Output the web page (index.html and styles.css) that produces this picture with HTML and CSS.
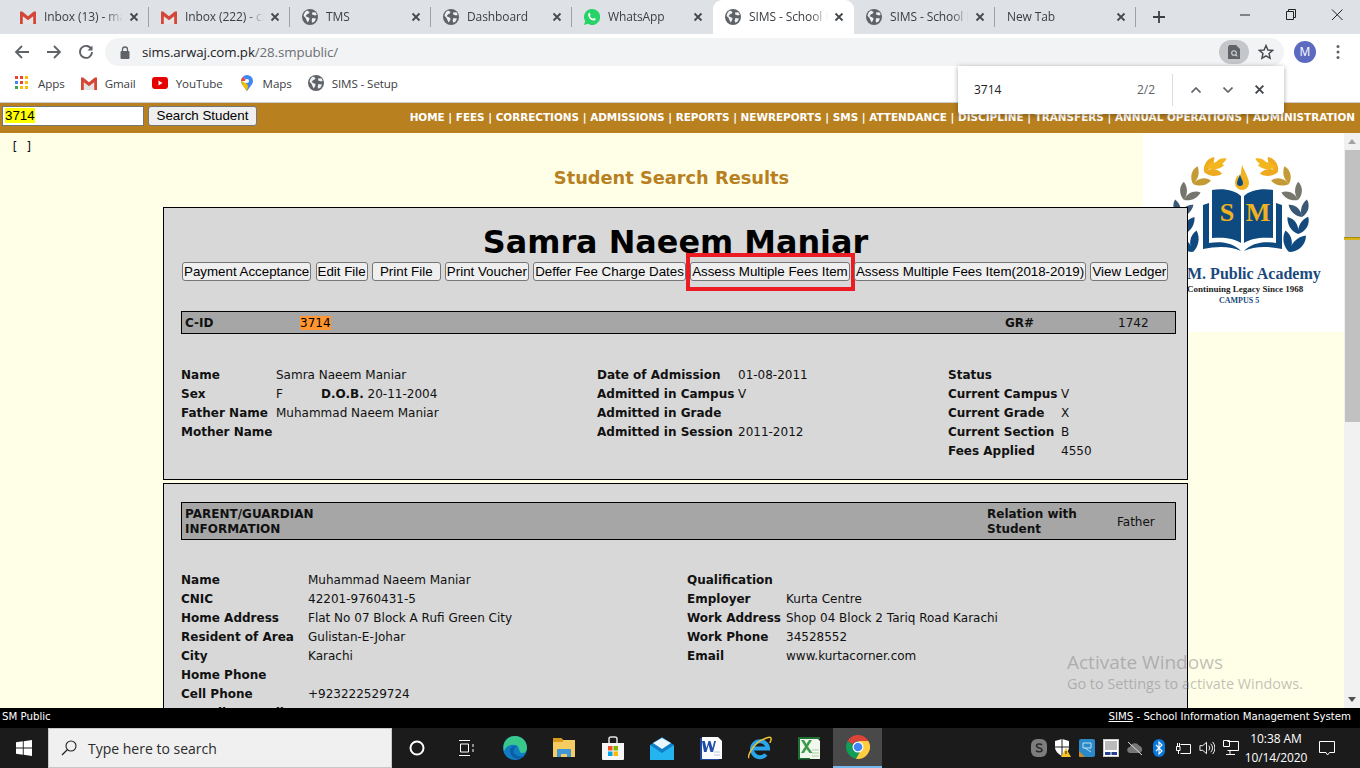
FILE: index.html
```html
<!DOCTYPE html>
<html lang="en">
<head>
<meta charset="utf-8">
<title>SIMS - School Information Management System</title>
<link rel="stylesheet" href="styles.css">
</head>
<body>
<svg class="defs" width="0" height="0" aria-hidden="true">
  <symbol id="i-gmail" viewBox="0 0 16 14">
    <path d="M2.800 6.200 8 10.200l5.200-4V14H2.800z" fill="#e4e4e4"/>
    <path d="M0 1.500h2.200L8 6.300l5.800-4.800H16V14h-2.800V6.200L8 10.200 2.800 6.200V14H0z" fill="#d44638"/>
  </symbol>
  <symbol id="i-globe" viewBox="0 0 16 16">
    <circle cx="8" cy="8" r="8" fill="#5f6368"/>
    <path d="M5 1.600 7.600 3 6.800 4.600 5 5.200 3.600 7.200 6 8.200 7.600 9.200 7 11.400 5.600 13.600 4.400 11 3.600 9 1.600 7C1.800 4.600 3 2.800 5 1.600ZM10 3.600l3.400-.4 1.400 2.600-1.800.8-1.400-.6-1.400-.6zM10.400 9l3.600.4-1.400 3-2.200 1.400-.8-2z" fill="#eef0f2"/>
  </symbol>
  <symbol id="i-whatsapp" viewBox="0 0 16 16">
    <path d="M8 0a8 8 0 0 0-6.800 12.200L0 16l3.900-1.200A8 8 0 1 0 8 0z" fill="#25d366"/>
    <path d="M5.400 3.800c.5 0 .8 1.200 1.100 1.900.1.400-.6 1-.6 1.300.6 1.300 1.700 2.200 2.900 2.800.4-.1.800-1 1.200-.9l1.700.9c.2 1.100-1 1.900-2 1.800-2.800-.4-5-2.600-5.500-5.200-.1-1.100.5-2.600 1.200-2.600z" fill="#fff"/>
  </symbol>
  <symbol id="i-x" viewBox="0 0 10 10">
    <path d="M1.500 1.500l7 7M8.500 1.500l-7 7" stroke="#45494e" stroke-width="1.800" fill="none"/>
  </symbol>
  <path id="leaf" d="M0 0C5-5 12-6 18-3 14 3 6 4 0 0Z"/>
</svg>

<div class="chrome">
  <div class="tabstrip">
    <div class="tab"><svg class="fav"><use href="#i-gmail"/></svg><span class="tab-title">Inbox (13) - mar</span><svg class="tab-x"><use href="#i-x"/></svg></div>
    <div class="tab"><svg class="fav"><use href="#i-gmail"/></svg><span class="tab-title">Inbox (222) - cas</span><svg class="tab-x"><use href="#i-x"/></svg></div>
    <div class="tab"><svg class="fav"><use href="#i-globe"/></svg><span class="tab-title">TMS</span><svg class="tab-x"><use href="#i-x"/></svg></div>
    <div class="tab"><svg class="fav"><use href="#i-globe"/></svg><span class="tab-title">Dashboard</span><svg class="tab-x"><use href="#i-x"/></svg></div>
    <div class="tab tab-noline"><svg class="fav"><use href="#i-whatsapp"/></svg><span class="tab-title">WhatsApp</span><svg class="tab-x"><use href="#i-x"/></svg></div>
    <div class="tab tab-active"><svg class="fav"><use href="#i-globe"/></svg><span class="tab-title">SIMS - School Information</span><svg class="tab-x"><use href="#i-x"/></svg></div>
    <div class="tab"><svg class="fav"><use href="#i-globe"/></svg><span class="tab-title">SIMS - School Information</span><svg class="tab-x"><use href="#i-x"/></svg></div>
    <div class="tab tab-new"><span class="tab-title">New Tab</span><svg class="tab-x"><use href="#i-x"/></svg></div>
    <svg class="newtab" viewBox="0 0 12 12"><path d="M6 0v12M0 6h12" stroke="#3c4043" stroke-width="1.800"/></svg>
    <div class="winctl">
      <svg class="winbtn" viewBox="0 0 46 30"><path d="M18 15h10" stroke="#222" stroke-width="1"/></svg>
      <svg class="winbtn" viewBox="0 0 46 30"><path d="M18.500 11.500h7v8h-7zM20.500 11.500v-2h7v8h-2" stroke="#222" fill="none"/></svg>
      <svg class="winbtn" viewBox="0 0 46 30"><path d="M18 9.500l10.500 10.500M28.500 9.500 18 20" stroke="#222" fill="none"/></svg>
    </div>
  </div>

  <div class="toolbar">
    <svg class="navicon" viewBox="0 0 16 16"><path d="M15 8H2M8 2 2 8l6 6" stroke="#5f6368" stroke-width="1.800" fill="none"/></svg>
    <svg class="navicon" viewBox="0 0 16 16"><path d="M1 8h13M8 2l6 6-6 6" stroke="#5f6368" stroke-width="1.800" fill="none"/></svg>
    <svg class="navicon" viewBox="0 0 16 16"><path d="M13.500 5.500A6 6 0 1 0 14 8" stroke="#5f6368" stroke-width="1.800" fill="none"/><path d="M14.500 1.500v5h-5z" fill="#5f6368"/></svg>
    <div class="omnibox">
      <svg class="lock" viewBox="0 0 10 13"><path d="M2.500 5V3.500a2.500 2.500 0 0 1 5 0V5" stroke="#5f6368" stroke-width="1.300" fill="none"/><rect x="0.500" y="5" width="9" height="8" rx="1" fill="#5f6368"/></svg>
      <span class="url"><span class="url-host">sims.arwaj.com.pk</span>/28.smpublic/</span>
      <span class="lens"><svg viewBox="0 0 12 14" width="12" height="14"><path d="M0 1.500 1.500 0H8l4 4v10H0z" fill="#5f6368"/><circle cx="6" cy="8" r="2.300" fill="none" stroke="#d0d2d5" stroke-width="1.100"/><path d="M7.600 9.600 9.300 11.300" stroke="#d0d2d5" stroke-width="1.100"/></svg></span>
      <svg class="star" viewBox="0 0 16 16"><path d="M8 1.500 9.900 6l4.800.4-3.700 3.100 1.100 4.800L8 11.800l-4.100 2.500L5 9.500 1.300 6.400 6.100 6z" fill="none" stroke="#45494e" stroke-width="1.400"/></svg>
    </div>
    <span class="avatar">M</span>
    <svg class="dots" viewBox="0 0 4 16"><circle cx="2" cy="2.500" r="1.500"/><circle cx="2" cy="8" r="1.500"/><circle cx="2" cy="13.500" r="1.500"/></svg>
  </div>

  <div class="bookmarks">
    <div class="bm bm-apps"><svg class="bm-ico-apps" viewBox="0 0 14 14"><g fill="#ea4335"><rect width="3" height="3"/><rect x="5" width="3" height="3"/></g><rect x="10" width="3" height="3" fill="#fbbc05"/><rect y="5" width="3" height="3" fill="#4285f4"/><rect x="5" y="5" width="3" height="3" fill="#ea4335"/><rect x="10" y="5" width="3" height="3" fill="#fbbc05"/><rect y="10" width="3" height="3" fill="#34a853"/><rect x="5" y="10" width="3" height="3" fill="#fbbc05"/><rect x="10" y="10" width="3" height="3" fill="#fbbc05"/></svg>Apps</div>
    <div class="bm bm-gmail"><svg class="fav"><use href="#i-gmail"/></svg>Gmail</div>
    <div class="bm bm-yt"><svg class="fav" viewBox="0 0 16 16"><rect y="2" width="16" height="12" rx="3" fill="#e60000"/><path d="M6.500 5.500v5l4-2.500z" fill="#fff"/></svg>YouTube</div>
    <div class="bm bm-maps"><svg class="fav" viewBox="0 0 12 16"><path d="M6 0a6 6 0 0 1 6 6c0 1.500-.6 2.500-1.200 3.400L6 16l-2-3z" fill="#4285f4"/><path d="M6 16 1.200 9.400C.6 8.500 0 7.500 0 6l6 3z" fill="#34a853"/><path d="M0 6a6 6 0 0 1 1.800-4.200L6 6z" fill="#ea4335"/><path d="M1.800 1.800A6 6 0 0 1 6 0l2 3-2 3z" fill="#4285f4"/><path d="M6 9 0 6l1.500 4L6 16l1-5z" fill="#fbbc05"/><circle cx="6" cy="6" r="2" fill="#fff"/></svg>Maps</div>
    <div class="bm"><svg class="fav"><use href="#i-globe"/></svg>SIMS - Setup</div>
  </div>
</div>

<div class="findbar">
  <span class="find-q">3714</span>
  <span class="find-c">2/2</span>
  <span class="find-sep"></span>
  <svg class="find-ico" viewBox="0 0 10 6"><path d="M.5 5.500 5 1l4.500 4.500" stroke="#5f6368" stroke-width="1.600" fill="none"/></svg>
  <svg class="find-ico" viewBox="0 0 10 6"><path d="M.5.500 5 5 9.500.5" stroke="#5f6368" stroke-width="1.600" fill="none"/></svg>
  <svg class="find-ico find-x"><use href="#i-x"/></svg>
</div>

<header class="sitebar">
  <form class="searchform">
    <div class="searchbox"><mark class="hl-y">3714</mark></div>
    <span class="btn btn-search">Search Student</span>
  </form>
  <nav class="sitenav">HOME | FEES | CORRECTIONS | ADMISSIONS | REPORTS | NEWREPORTS | SMS | ATTENDANCE | DISCIPLINE | TRANSFERS | ANNUAL OPERATIONS | ADMINISTRATION</nav>
</header>

<div class="viewport">
  <div class="pagearea">
    <main class="main">
      <div class="brackets">[ ]</div>
      <h2 class="results-title">Student Search Results</h2>

      <section class="card card-1">
        <h1 class="student-name">Samra Naeem Maniar</h1>
        <div class="btnrow">
          <span class="btn">Payment Acceptance</span>
          <span class="btn">Edit File</span>
          <span class="btn btn-wide">Print File</span>
          <span class="btn">Print Voucher</span>
          <span class="btn">Deffer Fee Charge Dates</span>
          <span class="btn btn-mark">Assess Multiple Fees Item<span class="redbox"></span></span>
          <span class="btn">Assess Multiple Fees Item(2018-2019)</span>
          <span class="btn">View Ledger</span>
        </div>
        <div class="idbar">
          <b class="idbar-l1">C-ID</b>
          <span class="idbar-v1"><mark class="hl-o">3714</mark></span>
          <b class="idbar-l2">GR#</b>
          <span class="idbar-v2">1742</span>
        </div>
        <div class="info3">
          <dl class="fields f-a">
            <dt>Name</dt><dd>Samra Naeem Maniar</dd>
            <dt>Sex</dt><dd class="sexrow"><span class="sexval">F</span><b>D.O.B.</b> 20-11-2004</dd>
            <dt>Father Name</dt><dd>Muhammad Naeem Maniar</dd>
            <dt>Mother Name</dt><dd></dd>
          </dl>
          <dl class="fields f-b">
            <dt>Date of Admission</dt><dd>01-08-2011</dd>
            <dt>Admitted in Campus</dt><dd>V</dd>
            <dt>Admitted in Grade</dt><dd></dd>
            <dt>Admitted in Session</dt><dd>2011-2012</dd>
          </dl>
          <dl class="fields f-c">
            <dt>Status</dt><dd></dd>
            <dt>Current Campus</dt><dd>V</dd>
            <dt>Current Grade</dt><dd>X</dd>
            <dt>Current Section</dt><dd>B</dd>
            <dt>Fees Applied</dt><dd>4550</dd>
          </dl>
        </div>
      </section>

      <section class="card card-2">
        <div class="idbar idbar-tall">
          <b class="pg-title">PARENT/GUARDIAN<br>INFORMATION</b>
          <b class="pg-rel">Relation with<br>Student</b>
          <span class="pg-val">Father</span>
        </div>
        <div class="info2">
          <dl class="fields f-d">
            <dt>Name</dt><dd>Muhammad Naeem Maniar</dd>
            <dt>CNIC</dt><dd>42201-9760431-5</dd>
            <dt>Home Address</dt><dd>Flat No 07 Block A Rufi Green City</dd>
            <dt>Resident of Area</dt><dd>Gulistan-E-Johar</dd>
            <dt>City</dt><dd>Karachi</dd>
            <dt>Home Phone</dt><dd></dd>
            <dt>Cell Phone</dt><dd>+923222529724</dd>
            <dt>Guardian Email</dt><dd></dd>
          </dl>
          <dl class="fields f-e">
            <dt>Qualification</dt><dd></dd>
            <dt>Employer</dt><dd>Kurta Centre</dd>
            <dt>Work Address</dt><dd>Shop 04 Block 2 Tariq Road Karachi</dd>
            <dt>Work Phone</dt><dd>34528552</dd>
            <dt>Email</dt><dd>www.kurtacorner.com</dd>
          </dl>
        </div>
      </section>
    </main>

    <aside class="logo">
      <svg class="logo-art" viewBox="0 0 201 130" width="201" height="130">
        <g id="wreath-r">
          <use href="#leaf" fill="#0e4a80" transform="translate(146 119) rotate(-35) scale(1.300)"/>
          <use href="#leaf" fill="#0e4a80" transform="translate(146 119) rotate(-90) scale(1.200)"/>
          <use href="#leaf" fill="#15497c" transform="translate(155 101) rotate(-50) scale(1.100)"/>
          <use href="#leaf" fill="#15497c" transform="translate(155 101) rotate(-112) scale(1.100)"/>
          <use href="#leaf" fill="#3a5876" transform="translate(159 84) rotate(-65)"/>
          <use href="#leaf" fill="#3a5876" transform="translate(159 84) rotate(-128)"/>
          <use href="#leaf" fill="#76766c" transform="translate(155 67) rotate(-80)"/>
          <use href="#leaf" fill="#76766c" transform="translate(155 67) rotate(-146)"/>
          <use href="#leaf" fill="#c49a35" transform="translate(146 51) rotate(-95)"/>
          <use href="#leaf" fill="#c49a35" transform="translate(146 51) rotate(-160)"/>
          <use href="#leaf" fill="#eeab1f" transform="translate(135 39) rotate(-115)"/>
          <use href="#leaf" fill="#eeab1f" transform="translate(135 39) rotate(-176)"/>
          <use href="#leaf" fill="#f4b61e" transform="translate(125 33) rotate(-140) scale(.8)"/>
          <use href="#leaf" fill="#f4b61e" transform="translate(133 34) rotate(-165)"/>
        </g>
        <use href="#wreath-r" transform="translate(196 0) scale(-1 1)"/>
        <path d="M99 32c4 9 7 14 7 18a7 7 0 0 1-14 0c0-3 1-5 3-8 1 2 1 3 2 4z" fill="#f0b21e"/>
        <path d="M97 41c1 5 3 6 3 9a3 3 0 0 1-6 0c0-3 2-5 3-9z" fill="#0e4a80"/>
        <path d="M60 72l6-2v40c13-2 24 0 32 8-10-5-24-5-38-2zM139 72l-6-2v40c-13-2-24 0-32 8 10-5 24-5 38-2z" fill="#0e4a80"/>
        <path d="M69 57c11-2 23 0 29 6v47c-7-5-18-6-29-5zM130 57c-11-2-23 0-29 6v47c7-5 18-6 29-5z" fill="#0e4a80"/>
        <text x="84" y="88" class="logo-sm">S</text>
        <text x="115" y="88" class="logo-sm">M</text>
      </svg>
      <div class="logo-name">M. Public Academy</div>
      <div class="logo-tag">Continuing Legacy Since 1968</div>
      <div class="logo-campus">CAMPUS 5</div>
    </aside>
  </div>

  <div class="scrollbar">
    <span class="sb-up"></span>
    <span class="sb-track"><span class="sb-thumb"></span><span class="sb-tick"></span></span>
    <span class="sb-down"></span>
  </div>

  <div class="activate">
    <div class="activate-h">Activate Windows</div>
    <div class="activate-s">Go to Settings to activate Windows.</div>
  </div>
</div>

<div class="statusbar">
  <span>SM Public</span>
  <span><u>SIMS</u> - School Information Management System</span>
</div>

<footer class="taskbar">
  <div class="start"><svg viewBox="0 0 16 16" width="16" height="16"><path d="M0 2.300 6.800 1.300V7.600H0zM7.700 1.200 16 0V7.600H7.700zM0 8.400H6.800V14.700L0 13.700zM7.700 8.400H16V16L7.700 14.800z" fill="#fff"/></svg></div>
  <div class="tb-search"><svg viewBox="0 0 16 16" width="16" height="16"><circle cx="10" cy="6" r="5" fill="none" stroke="#222" stroke-width="1.100"/><path d="M6.500 9.500 1 15" stroke="#222" stroke-width="1.300"/></svg><span>Type here to search</span></div>
  <div class="tb-apps">
    <span class="tb-app"><svg viewBox="0 0 16 16" width="16" height="16"><circle cx="8" cy="8" r="6.500" fill="none" stroke="#fff" stroke-width="2"/></svg></span>
    <span class="tb-app"><svg viewBox="0 0 16 16" width="16" height="16"><path d="M1 .5h11M1 15.500h11M2.500 4h8v8h-8zM15 4v3M15 9v3" stroke="#fff" fill="none"/></svg></span>
    <span class="tb-app"><svg viewBox="0 0 24 24" width="24" height="24"><circle cx="12" cy="12" r="12" fill="#0f7cc4"/><path d="M12 0c7 0 12 5 12 12 0 3-2 5-5 5-4 0-1-6-7-8-4-1-9 1-11 6C-1 7 4 0 12 0z" fill="#39c88c"/><path d="M7 15c0-3 3-6 8-5-4 1-5 4-4 7 2 3 6 4 10 3-4 5-14 3-14-5z" fill="#0b5fa5"/></svg></span>
    <span class="tb-app"><svg viewBox="0 0 22 20" width="22" height="20"><path d="M0 0h8l2 2h12v17H0z" fill="#f4cc62"/><path d="M0 0h8l2 2v2H0z" fill="#d99a1c"/><path d="M4 19v-7a1 1 0 0 1 1-1h12a1 1 0 0 1 1 1v7h-4v-3H8v3z" fill="#3f97d8"/></svg></span>
    <span class="tb-app"><svg viewBox="0 0 24 24" width="24" height="24"><path d="M8 7V3a2 2 0 0 1 2-2h4a2 2 0 0 1 2 2v4" fill="none" stroke="#e4e4e4" stroke-width="1.500"/><path d="M1 7h22v16a1 1 0 0 1-1 1H2a1 1 0 0 1-1-1z" fill="#f6f6f6"/><rect x="7" y="10" width="4.500" height="4.500" fill="#f25022"/><rect x="12.500" y="10" width="4.500" height="4.500" fill="#7fba00"/><rect x="7" y="15.500" width="4.500" height="4.500" fill="#00a4ef"/><rect x="12.500" y="15.500" width="4.500" height="4.500" fill="#ffb900"/></svg></span>
    <span class="tb-app"><svg viewBox="0 0 24 23" width="24" height="23"><path d="M0 8 12 0l12 8v15H0z" fill="#0f7fc8"/><path d="M0 8l12 8 12-8v15H0z" fill="#24b5f0"/><path d="M3 6l9-5 9 5-9 6z" fill="#e8f7ff"/></svg></span>
    <span class="tb-app"><svg viewBox="0 0 24 24" width="24" height="24"><path d="M3 1h16l4 4v18H3z" fill="#fdfdfd"/><path d="M3 1h10v14H3z" fill="#fff"/><path d="M1 4h2l0 19h17v1H1z" fill="#22479c"/><path d="M1 2h2v2H1z" fill="#22479c"/><path d="M3 5h2.800l1.700 7 2-7h2l2 7 1.700-7H17l-3 11h-2.500L9.500 9l-2 7H5z" fill="#1f4fa8"/><path d="M15 16h6M15 19h6" stroke="#b7c6de"/></svg></span>
    <span class="tb-app"><svg viewBox="0 0 24 24" width="24" height="24"><path d="M5 12.500h15A8 8 0 1 0 18 18.500" fill="none" stroke="#2aa4ea" stroke-width="4"/><path d="M1 22C-1 19 7 6 16 3c4-2 8-3 7 1 0 1-1 2-1 3" fill="none" stroke="#f0c132" stroke-width="1.500"/></svg></span>
    <span class="tb-app"><svg viewBox="0 0 24 24" width="24" height="24"><path d="M1 1h18l4 4v18H1z" fill="#f1f7ec"/><path d="M1 1h22v2H1zM1 3h2v20H1zM1 22h12v1.500H1z" fill="#1f6f34"/><path d="M4 4h3l2.500 4L12 4h3l-4 6.500 4.500 6.500h-3L9.500 13 7 17H4l4-6.500z" fill="#3d9b4c"/><path d="M15 14h7M15 17h7M15 20h7" stroke="#a9cfa4"/></svg></span>
    <span class="tb-app tb-app-active"><svg viewBox="0 0 24 24" width="24" height="24"><path d="M1.600 6A12 12 0 0 1 22.400 6H12A6 6 0 0 0 6.500 9.600z" fill="#db4437"/><path d="M1.600 6A12 12 0 0 0 10 23.800L15 15A6 6 0 0 1 6.500 9.600z" fill="#0f9d58"/><path d="M22.400 6A12 12 0 0 1 10 23.800L15 15A6 6 0 0 0 12 6z" fill="#ffcd40"/><circle cx="12" cy="12" r="5.500" fill="#fff"/><circle cx="12" cy="12" r="4.300" fill="#4285f4"/></svg></span>
  </div>
  <div class="tray">
    <svg class="tr" viewBox="0 0 16 18"><rect width="16" height="18" rx="6" fill="#7d7d7d"/><path d="M11 6c-1-1.500-5.500-1.500-5.500 1 0 2.500 5.500 1.500 5.500 4 0 2.500-5 2-6 .5" fill="none" stroke="#2a2a2a" stroke-width="1.500"/></svg>
    <svg class="tr" viewBox="0 0 16 18"><path d="M0 2 7 0l7 2v6c0 4-3 7-7 9-4-2-7-5-7-9z" fill="#fff"/><path d="M7 0v17M0 8h14" stroke="#222"/><path d="M11 9l5 9H6z" fill="#f7c326"/><path d="M11 12v3" stroke="#222"/></svg>
    <svg class="tr" viewBox="0 0 16 18"><rect width="16" height="18" rx="2" fill="#2b89c9"/><path d="M4 4h8v5H4zM6 9l6 4" fill="none" stroke="#bfe3f5"/><path d="M0 12l6 6H1a1 1 0 0 1-1-1z" fill="#c88d28"/></svg>
    <svg class="tr" viewBox="0 0 16 18"><rect x=".5" y=".5" width="15" height="17" fill="#fff" stroke="#ccc"/><rect x="2" y="2" width="12" height="9" fill="#bbb"/><path d="M2 13h5.500v3H2zM8.500 13H14v3H8.500z" fill="#24408e"/></svg>
    <svg class="tr" viewBox="0 0 16 18"><path d="M3.500 14a3 3 0 0 1-.5-6 5 5 0 0 1 9-1.500A4 4 0 0 1 13 14z" fill="#777"/><path d="M1 3l14 13" stroke="#ddd"/></svg>
    <svg class="tr tr-bt" viewBox="0 0 12 18"><rect width="12" height="18" rx="6" fill="#0a78d7"/><path d="M3 6l6 6-3 3V3l3 3-6 6" fill="none" stroke="#fff" stroke-width="1.100"/></svg>
    <svg class="tr" viewBox="0 0 16 18"><path d="M5.500 5.500h10v9h-10M5 7.500H1.500v4H5zM2.500 7.500V4M4.500 7.500V4M3.500 11.500V15" fill="none" stroke="#fff"/></svg>
    <svg class="tr" viewBox="0 0 17 18"><path d="M1 6.500h3L8 3v12l-4-3.500H1zM10.500 6.500a4 4 0 0 1 0 5M12.500 4.500a7 7 0 0 1 0 9M14.500 2.500a10 10 0 0 1 0 13" fill="none" stroke="#fff"/></svg>
    <svg class="tr" viewBox="0 0 16 18"><path d="M4.500 2.500h11v9h-11M.5 1.500h6v6h-6zM7 11.500V15M3 15.500h9" fill="none" stroke="#fff"/></svg>
  </div>
  <div class="clock"><div>10:38 AM</div><div>10/14/2020</div></div>
  <div class="notif"><svg viewBox="0 0 16 16" width="16" height="16"><path d="M.5 1.500h15v11h-5l-2 2.500-1.500-2.500H.5z" fill="none" stroke="#fff"/></svg></div>
</footer>
</body>
</html>
```

FILE: styles.css
```css
* { box-sizing: border-box; }
html, body { margin: 0; padding: 0; width: 1360px; height: 768px; overflow: hidden; }
body { display: flex; flex-direction: column; position: relative; background: #ffffe8; font-family: "DejaVu Sans", sans-serif; }
.defs { position: absolute; }

/* Browser chrome */
.chrome { height: 103px; flex: none; font-family: "Open Sans", "Noto Sans", sans-serif; font-size: 12px; color: #3c4043; }
.tabstrip { height: 34px; background: #dee1e6; display: flex; padding-left: 8px; align-items: stretch; }
.tab { width: 141px; flex: none; display: flex; align-items: center; padding: 0 10px 1px 12px; position: relative; }
.tab::after { content: ""; position: absolute; right: 0; top: 7px; bottom: 7px; width: 1px; background: #9da0a5; }
.tab-noline::after, .tab-active::after { display: none; }
.tab-active { background: #fff; border-radius: 9px 9px 0 0; }
.fav { width: 16px; height: 16px; flex: none; margin-right: 8px; }
.tab-title { flex: 1; white-space: nowrap; overflow: hidden; min-width: 0; -webkit-mask-image: linear-gradient(90deg, #000 78%, transparent 100%); mask-image: linear-gradient(90deg, #000 78%, transparent 100%); letter-spacing: -0.1px; }
.tab-x { width: 10px; height: 10px; flex: none; margin-left: 6px; }
.newtab { width: 12px; height: 12px; align-self: center; margin-left: 17px; }
.winctl { display: flex; margin-left: auto; align-self: flex-start; }
.winbtn { width: 46px; height: 30px; }

.toolbar { height: 34px; background: #fff; display: flex; align-items: center; padding: 2px 0 0 14px; }
.navicon { width: 16px; height: 16px; margin-right: 16px; flex: none; }
.omnibox { width: 1179px; height: 28px; margin-left: -5px; background: #f1f3f4; border-radius: 14px; display: flex; align-items: center; padding-left: 15px; padding-right: 6px; }
.lock { width: 10px; height: 13px; margin-right: 12px; }
.url { font-size: 13.300px; color: #6b6f74; letter-spacing: -0.1px; }
.url-host { color: #202124; }
.lens { margin-left: auto; width: 30px; height: 24px; border-radius: 12px; background: #c4c6c9; display: flex; align-items: center; justify-content: center; }
.star { width: 16px; height: 16px; margin-left: 9px; margin-right: 4px; }
.avatar { width: 22px; height: 22px; border-radius: 50%; background: #5c6bc0; color: #fff; text-align: center; line-height: 22px; margin-left: 10px; font-size: 12px; }
.dots { width: 4px; height: 16px; fill: #5f6368; margin-left: 20px; }

.bookmarks { height: 35px; background: #fff; border-bottom: 1px solid #ccc; display: flex; align-items: center; padding: 0 0 4px 15px; color: #3c4043; font-size: 11.600px; letter-spacing: -0.1px; }
.bm { display: flex; align-items: center; margin-right: 16px; }
.bm .fav { margin-right: 8px; }
.bm-ico-apps { width: 14px; height: 14px; margin-right: 9px; }

/* Find bar */
.findbar { position: absolute; left: 958px; top: 66px; width: 326px; height: 48px; background: #fff; border-radius: 0 0 3px 3px; box-shadow: 0 1px 5px rgba(0,0,0,.35); display: flex; align-items: center; padding: 0 0 1px 16px; font-family: "Open Sans", "Noto Sans", sans-serif; font-size: 12px; color: #3c4043; z-index: 5; }
.find-q { flex: 1; color: #202124; }
.find-c { color: #5f6368; margin-right: 17px; }
.find-sep { width: 1px; height: 32px; background: #dadce0; margin-right: 18px; }
.find-ico { width: 10px; height: 6px; margin-right: 22px; }
.find-x { height: 11px; width: 11px; margin-right: 19px; margin-left: -1px; }

/* Site header */
.sitebar { height: 30px; flex: none; background: #b8801f; display: flex; align-items: flex-start; padding: 3px 5px 0 2px; position: relative; }
.searchform { display: flex; gap: 4px; align-items: center; margin: 0; }
.searchbox { width: 142px; height: 20px; background: #fff; border: 1px solid #767676; font-family: "Liberation Sans", Arial, sans-serif; font-size: 13.333px; padding: 1px 2px; line-height: 16px; }
.hl-y { background: #ff0; color: #000; }
.sitenav { margin-left: auto; color: #fff; font-size: 10.430px; font-weight: 700; white-space: nowrap; line-height: 22px; }

/* Buttons */
.btn { display: inline-block; font-family: "Liberation Sans", Arial, sans-serif; font-size: 13.333px; line-height: 17px; height: 19px; padding: 0 1px; background: #efefef; color: #000; border: 1px solid #767676; border-radius: 3px; white-space: nowrap; position: relative; flex: none; }
.btn-search { height: 20px; padding: 0 7.500px; line-height: 18px; }
.btn-wide { padding: 0 7px; }

/* Page */
.viewport { flex: 1; min-height: 0; display: flex; position: relative; overflow: hidden; }
.pagearea { width: 1344px; height: 100%; display: flex; overflow: hidden; background: #ffffe8; }
.main { width: 1143px; flex: none; position: relative; z-index: 1; font-size: 12px; color: #111; }
.brackets { font-family: "DejaVu Sans Mono", monospace; font-size: 12px; padding: 6px 0 0 11px; height: 25px; line-height: 17px; }
.results-title { margin: 0; font-size: 17.800px; line-height: 22px; padding-top: 9px; height: 49px; text-align: center; color: #b8801f; font-weight: 700; width: 1343px; }
.card { width: 1025px; margin-left: 163px; background: #d8d8d8; border: 1px solid #000; padding: 0 11px 0 17px; }
.card-1 { height: 273px; }
.card-2 { margin-top: 3px; height: 260px; padding-top: 18px; }
.student-name { margin: 0; font-size: 31.850px; font-weight: 700; line-height: 39px; padding: 15px 6px 0 0; height: 54px; text-align: center; color: #000; }
.btnrow { display: flex; gap: 4.300px; margin-left: 1px; height: 19px; }
.redbox { position: absolute; left: -5px; right: -6px; top: -10px; height: 38px; border: 4px solid #ed1c24; pointer-events: none; }
.idbar { height: 23px; margin-top: 30px; background: #a6a6a6; border: 1px solid #000; display: flex; align-items: center; position: relative; padding-left: 3px; white-space: nowrap; }
.idbar-tall { height: 38px; margin-top: 0; line-height: 15px; padding-top: 2px; }
.idbar-l1 { width: 115px; }
.idbar-v1 { width: 705px; }
.hl-o { background: #ff9632; color: #000; }
.idbar-l2 { width: 113px; }
.pg-title { width: 802px; }
.pg-rel { width: 130px; }

.fields { margin: 0; display: grid; grid-auto-rows: 19px; line-height: 19px; white-space: nowrap; }
.fields dt { font-weight: 700; margin: 0; }
.fields dd { margin: 0; }
.info3 { display: flex; margin-top: 32px; }
.f-a { width: 416px; grid-template-columns: 95px 1fr; flex: none; }
.f-b { width: 351px; grid-template-columns: 141px 1fr; flex: none; }
.f-c { grid-template-columns: 113px 1fr; flex: 1; }
.sexval { display: inline-block; width: 45px; }
.info2 { display: flex; margin-top: 31px; }
.f-d { width: 506px; grid-template-columns: 127px 1fr; flex: none; }
.f-e { grid-template-columns: 99px 1fr; flex: 1; }

/* Logo */
.logo { width: 201px; height: 199px; flex: none; background: #fff; font-family: "Liberation Serif", serif; overflow: hidden; }
.logo-art { display: block; }
.logo-sm { font-family: "Liberation Serif", serif; font-weight: 700; font-size: 26px; fill: #f0b21e; text-anchor: middle; }
.logo-name { font-size: 16px; font-weight: 700; color: #1a4a7c; line-height: 19px; padding-top: 1px; height: 20px; white-space: nowrap; padding-left: 44px; }
.logo-tag { font-size: 9px; font-weight: 700; color: #222; line-height: 12px; padding-left: 44px; white-space: nowrap; }
.logo-campus { font-size: 8px; font-weight: 700; color: #1a4a7c; line-height: 11px; padding-left: 76px; }

/* Scrollbar */
.scrollbar { width: 16px; flex: none; background: #f1f1f1; display: flex; flex-direction: column; }
.sb-up, .sb-down { height: 17px; flex: none; position: relative; }
.sb-up::after, .sb-down::after { content: ""; position: absolute; left: 4px; border-left: 4px solid transparent; border-right: 4px solid transparent; }
.sb-up::after { top: 6px; border-bottom: 5px solid #a3a3a3; }
.sb-down::after { top: 6px; border-top: 5px solid #505050; }
.sb-track { flex: 1; position: relative; }
.sb-thumb { display: block; margin: 0 0 0 1px; width: 15px; height: 272px; background: #c1c1c1; }
.sb-tick { position: absolute; left: 0; right: 0; top: 87px; height: 3px; background: #d8b21b; border-top: 1px solid #a88a10; }

.activate { position: absolute; left: 1067px; top: 517px; color: rgba(130,130,130,.5); font-family: "Open Sans", "Noto Sans", sans-serif; z-index: 3; pointer-events: none; white-space: nowrap; }
.activate-h { font-size: 19px; line-height: 24px; }
.activate-s { font-size: 14.400px; line-height: 20px; }

/* Status bar and taskbar */
.statusbar { height: 20px; flex: none; background: #000; color: #fff; display: flex; justify-content: space-between; align-items: center; padding: 0 9px 3px 2px; font-size: 10.200px; position: relative; z-index: 2; }
.taskbar { height: 40px; flex: none; background: #1b1b1b; display: flex; align-items: stretch; color: #fff; font-family: "Open Sans", "Noto Sans", sans-serif; }
.start { width: 48px; flex: none; display: flex; align-items: center; justify-content: center; }
.tb-search { width: 344px; flex: none; background: #f0f0f0; border: 1px solid #c8c8c8; display: flex; align-items: center; padding-left: 12px; color: #2b2b2b; font-size: 14px; gap: 11px; }
.tb-apps { display: flex; }
.tb-app { width: 49px; display: flex; align-items: center; justify-content: center; flex: none; }
.tb-app-active { background: #494949; border-bottom: 2px solid #76b9ed; }
.tray { display: flex; align-items: center; gap: 8px; margin-left: auto; }
.tr { width: 16px; height: 18px; flex: none; }
.clock { width: 68px; flex: none; text-align: center; font-size: 12px; line-height: 19px; padding-top: 1px; margin-left: 3px; letter-spacing: -.1px; white-space: nowrap; }
.notif { width: 34px; margin-right: 16px; flex: none; display: flex; align-items: center; justify-content: center; }
```
